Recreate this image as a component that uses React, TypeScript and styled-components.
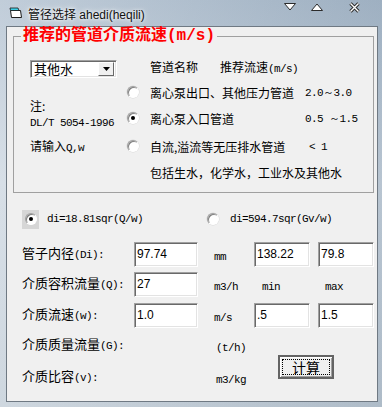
import React from 'react';
import styled, { createGlobalStyle } from 'styled-components';

const GlobalStyle = createGlobalStyle`
  html, body {
    margin: 0;
    padding: 0;
    overflow: hidden;
    background: #b9c7d4;
  }
`;

const Window = styled.div`
  width: 382px;
  height: 407px;
  display: flex;
  flex-direction: column;
  background:
    linear-gradient(90deg, rgba(255,255,255,0.28), rgba(110,130,150,0.18)),
    linear-gradient(180deg, #a9bacb 0%, #c8d3de 45%, #bcc8d3 100%);
  font-family: "Noto Sans CJK SC", sans-serif;
`;

const TitleBar = styled.div`
  height: 26px;
  flex-shrink: 0;
  display: flex;
  align-items: center;
  padding-left: 9px;
`;

const TitleText = styled.span`
  margin-left: 5px;
  font-family: "Liberation Sans", "Noto Sans CJK SC", sans-serif;
  font-size: 12px;
  color: #111;
  text-shadow: 0 0 6px #fff, 0 0 3px #fff;
`;

const CaptionButtons = styled.div`
  margin-left: auto;
  align-self: flex-start;
  margin-top: 1px;
  height: 12px;
  display: flex;
  align-items: center;
  padding-right: 22px;
`;

const Caption = styled.svg<{ $gap?: number }>`
  margin-left: ${p => p.$gap ?? 0}px;
  display: block;
`;

const Client = styled.div`
  flex: 1;
  margin: 0 4px 5px 6px;
  background: #f0f0f0;
  border: 1px solid #6f7983;
`;

const Group = styled.fieldset`
  margin: 1px 3px 0 6px;
  padding: 0 0 7px 0;
  border: 1px solid #a0a0a0;
  min-width: 0;
`;

const Legend = styled.legend`
  margin-left: 7px;
  padding: 0 2px;
  font-family: "Liberation Mono", "Noto Sans CJK SC", monospace;
  font-size: 16px;
  line-height: 16px;
  font-weight: bold;
  color: #ff0000;
`;

const GroupBody = styled.div`
  display: flex;
  padding: 11px 0 0 16px;
`;

const LeftPane = styled.div`
  width: 97px;
  display: flex;
  flex-direction: column;
  font-size: 12px;
  line-height: 15px;
  color: #000;
`;

const Sunken = styled.div`
  background: #fff;
  border: 1px solid;
  border-color: #a0a0a0 #fff #fff #a0a0a0;
  box-shadow: inset 1px 1px 0 #696969, inset -1px -1px 0 #e3e3e3;
  box-sizing: border-box;
`;

const Combo = styled(Sunken)`
  margin-top: 5px;
  width: 87px;
  height: 18px;
  display: flex;
  align-items: center;
  padding: 0 2px 0 3px;
  font-size: 13px;
`;

const ComboText = styled.span`
  flex: 1;
  line-height: 14px;
`;

const DropButton = styled.span`
  width: 16px;
  height: 14px;
  box-sizing: border-box;
  background: #f0f0f0;
  border: 1px solid;
  border-color: #fff #696969 #696969 #fff;
  display: flex;
  align-items: center;
  justify-content: center;
`;

const NoteLine = styled.div<{ $gap?: number }>`
  margin-top: ${p => p.$gap ?? 0}px;
`;

const Lat = styled.span`
  font-family: "Liberation Mono", monospace;
  font-size: 11px;
  letter-spacing: -0.6px;
`;

const PipeTable = styled.div`
  display: grid;
  grid-template-columns: 23px 155px 1fr;
  grid-template-rows: 26px 22px 30px 26px 26px;
  align-items: center;
  font-size: 12px;
  line-height: 15px;
  color: #000;
`;

const HeaderCell = styled.div`
  grid-column: 2 / 4;
  display: flex;
  gap: 22px;
`;

const SpeedCell = styled.div<{ $indent?: number }>`
  padding-left: ${p => p.$indent ?? 0}px;
`;

const Radio = styled.span<{ $checked?: boolean }>`
  display: inline-flex;
  align-items: center;
  justify-content: center;
  width: 12px;
  height: 12px;
  box-sizing: border-box;
  border-radius: 50%;
  background: #fff;
  border: 1px solid;
  border-color: #a0a0a0 #fff #fff #a0a0a0;
  box-shadow: inset 1px 1px 0 #808080, 0 0 0 0.5px #d8d8d8;

  &::after {
    content: '';
    width: 4px;
    height: 4px;
    border-radius: 50%;
    background: ${p => (p.$checked ? '#000' : 'transparent')};
  }
`;

const RadioLine = styled.div`
  display: flex;
  align-items: center;
  height: 20px;
  margin: 16px 0 10px;
  padding-left: 15px;
`;

const Option = styled.div<{ $width?: number; $gap: number }>`
  display: flex;
  align-items: center;
  gap: ${p => p.$gap}px;
  width: ${p => (p.$width ? `${p.$width}px` : 'auto')};
`;

const FocusBox = styled.span`
  width: 17px;
  height: 19px;
  background: #d6d6d6;
  display: flex;
  align-items: center;
  justify-content: center;
`;

const Form = styled.div`
  display: grid;
  grid-template-columns: 112px 64px 56px 64px 56px;
  grid-template-rows: 30px 30px 32px 28px 36px;
  align-items: center;
  padding-left: 15px;
  color: #000;
`;

const Label = styled.div`
  font-size: 13px;
  line-height: 16px;
`;

const Unit = styled.div<{ $indent?: number }>`
  padding-left: ${p => p.$indent ?? 16}px;
  font-size: 12px;
`;

const Field = styled.input<{ $width: number }>`
  width: ${p => p.$width}px;
  height: 25px;
  box-sizing: border-box;
  margin: 0;
  padding: 0 2px;
  background: #fff;
  border: 1px solid;
  border-color: #a0a0a0 #fff #fff #a0a0a0;
  box-shadow: inset 1px 1px 0 #696969, inset -1px -1px 0 #e3e3e3;
  font-family: "Liberation Sans", sans-serif;
  font-size: 12px;
  color: #000;
  outline: none;
`;

const CalcButton = styled.button`
  grid-row: 4 / 6;
  grid-column: 4 / 6;
  justify-self: start;
  align-self: center;
  margin: 8px 0 0 24px;
  width: 56px;
  height: 24px;
  padding: 2px;
  display: flex;
  box-sizing: border-box;
  background: #f0f0f0;
  border: 2px solid #646464;
  box-shadow: inset 1px 1px 0 #fff, inset -1px -1px 0 #a0a0a0;
  font-family: "Noto Sans CJK SC", sans-serif;
  font-size: 14px;
  color: #000;
`;

const FocusRing = styled.span`
  flex: 1;
  display: flex;
  align-items: center;
  justify-content: center;
  border: 1px dotted #000;
  line-height: 14px;
`;

const pipes = [
  { name: '离心泵出口、其他压力管道', speed: '2.0～3.0', checked: false, indent: 0 },
  { name: '离心泵入口管道', speed: '0.5 ～1.5', checked: true, indent: 0 },
  { name: '自流,溢流等无压排水管道', speed: '< 1', checked: false, indent: 4 },
];

const AppIcon: React.FC = () => (
  <svg width="14" height="12" viewBox="0 0 14 12">
    <path d="M1.5 3.5 L11.5 3.5 L12.5 10.5 L2.5 10.5 Z" fill="#fff" stroke="#1a1a1a" />
    <path d="M1 1 L9 1 L10 3.5 L1.5 3.5 Z" fill="#3fd0e8" stroke="#1a1a1a" strokeWidth="0.8" />
  </svg>
);

const App: React.FC = () => {
  return (
    <>
      <GlobalStyle />
      <Window>
        <TitleBar>
          <AppIcon />
          <TitleText>管径选择 ahedi(heqili)</TitleText>
          <CaptionButtons>
            <Caption width="12" height="8" viewBox="0 0 12 8">
              <path d="M0.5 0.5 L11.5 0.5 L6 7 Z" fill="#fff" stroke="#2b2b2b" />
            </Caption>
            <Caption width="12" height="8" viewBox="0 0 12 8" $gap={15}>
              <path d="M0.5 7.5 L11.5 7.5 L6 1 Z" fill="#fff" stroke="#2b2b2b" />
            </Caption>
            <Caption width="11" height="11" viewBox="0 0 11 11" $gap={26}>
              <path d="M1.5 1.5 L9.5 9.5 M9.5 1.5 L1.5 9.5" stroke="#2b2b2b" strokeWidth="3.2" />
              <path d="M1.5 1.5 L9.5 9.5 M9.5 1.5 L1.5 9.5" stroke="#fff" strokeWidth="1.4" />
            </Caption>
          </CaptionButtons>
        </TitleBar>

        <Client>
          <Group>
            <Legend>推荐的管道介质流速(m/s)</Legend>
            <GroupBody>
              <LeftPane>
                <Combo>
                  <ComboText>其他水</ComboText>
                  <DropButton>
                    <svg width="7" height="4" viewBox="0 0 7 4">
                      <path d="M0 0 L7 0 L3.5 4 Z" fill="#000" />
                    </svg>
                  </DropButton>
                </Combo>
                <NoteLine $gap={20}>注:</NoteLine>
                <NoteLine><Lat>DL/T 5054-1996</Lat></NoteLine>
                <NoteLine $gap={7}>请输入<Lat>Q,w</Lat></NoteLine>
              </LeftPane>

              <PipeTable>
                <HeaderCell>
                  <span>管道名称</span>
                  <span>推荐流速<Lat>(m/s)</Lat></span>
                </HeaderCell>
                {pipes.map(pipe => (
                  <React.Fragment key={pipe.name}>
                    <Radio $checked={pipe.checked} />
                    <div>{pipe.name}</div>
                    <SpeedCell $indent={pipe.indent}><Lat>{pipe.speed}</Lat></SpeedCell>
                  </React.Fragment>
                ))}
                <HeaderCell>包括生水，化学水，工业水及其他水</HeaderCell>
              </PipeTable>
            </GroupBody>
          </Group>

          <RadioLine>
            <Option $width={185} $gap={8}>
              <FocusBox><Radio $checked /></FocusBox>
              <Lat>di=18.81sqr(Q/w)</Lat>
            </Option>
            <Option $gap={11}>
              <Radio />
              <Lat>di=594.7sqr(Gv/w)</Lat>
            </Option>
          </RadioLine>

          <Form>
            <Label>管子内径<Lat>(Di):</Lat></Label>
            <Field $width={64} value="97.74" readOnly />
            <Unit><Lat>mm</Lat></Unit>
            <Field $width={56} value="138.22" readOnly />
            <Field $width={56} value="79.8" readOnly />

            <Label>介质容积流量<Lat>(Q):</Lat></Label>
            <Field $width={64} value="27" readOnly />
            <Unit><Lat>m3/h</Lat></Unit>
            <Unit $indent={8}><Lat>min</Lat></Unit>
            <Unit $indent={7}><Lat>max</Lat></Unit>

            <Label>介质流速<Lat>(w):</Lat></Label>
            <Field $width={64} value="1.0" readOnly />
            <Unit><Lat>m/s</Lat></Unit>
            <Field $width={56} value=".5" readOnly />
            <Field $width={56} value="1.5" readOnly />

            <Label>介质质量流量<Lat>(G):</Lat></Label>
            <div />
            <Unit $indent={18}><Lat>(t/h)</Lat></Unit>
            <CalcButton>
              <FocusRing>计算</FocusRing>
            </CalcButton>

            <Label>介质比容<Lat>(v):</Lat></Label>
            <div />
            <Unit $indent={18}><Lat>m3/kg</Lat></Unit>
          </Form>
        </Client>
      </Window>
    </>
  );
};

export default App;
